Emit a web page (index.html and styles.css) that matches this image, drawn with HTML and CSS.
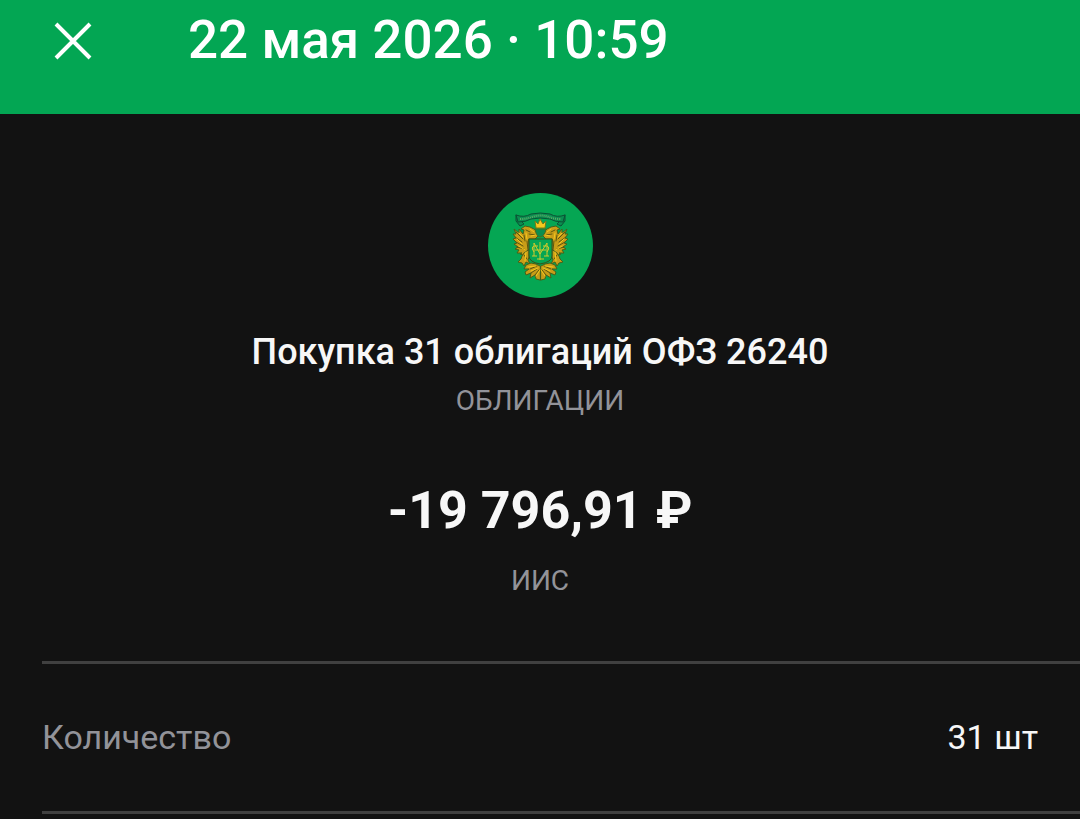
FILE: index.html
```html
<!DOCTYPE html>
<html lang="ru">

<head>
    <meta charset="UTF-8" />
    <meta name="viewport" content="width=device-width, initial-scale=1" />
    <title>Покупка облигаций</title>
    <link rel="stylesheet" href="styles.css">
</head>

<body>
    <header class="topbar">
        <button type="button" class="close-btn" aria-label="Закрыть">
            <svg viewBox="0 0 40 40" width="40" height="40" fill="none" stroke="currentColor" stroke-width="4">
                <path d="M3 4 37 38M37 4 3 38" />
            </svg>
        </button>
        <h1 class="topbar-title">22 мая 2026 · 10:59</h1>
    </header>

    <main>
        <section class="summary">
            <svg class="emblem" viewBox="0 0 105 105" aria-hidden="true">
                <defs>
                    <!-- left half of the eagle, mirrored for the right one -->
                    <g id="eagle-half" stroke-linejoin="round" stroke-linecap="round">
                        <path class="gold" d="M41 58 38 62 35 62 32 61 34 60 29 60 31 57 27 56 30 54 26 51 29 50 25 46 28 45 25 41 28 41 26 36 31 40 31 36 35 41 36 37 33 36 37 33 42 34 46 36 50 39 51 42 47 46 41 46Z" />
                        <path class="gold" d="M41 57 41 64 40 67 42 71 38 69 36 73 34 70 30 69 33 66 34 63 36 60Z" />
                        <path class="gold" d="M52 73 48 71 43 70 38 72 36 76 41 76 37 79 38 82 43 80 42 85 47 82 48 86 52 87Z" />
                        <path class="feather" d="M28 39 35 46M27 44 34 49M28 49 35 53M29 54 36 56M36 42 37 48M39 48 40 57M41 41 47 42M36 62 39 66M42 76 49 73M43 80 49 76M47 82 51 77M38 37 42 39" />
                        <path class="shine" d="M31 40 35 44M29 46 34 51M31 53 37 57M38 40 39 46M38 59 37 68M40 74 48 73M43 78 50 75M48 83 52 77M42 36 46 39M43 43 48 42" />
                        <path class="scroll" d="M28 22 28 28 32 33 36 31 33 28" />
                    </g>
                </defs>
                <circle cx="52.5" cy="52.5" r="52.5" fill="#05a653" />
                <use href="#eagle-half" />
                <use href="#eagle-half" transform="matrix(-1 0 0 1 105 0)" />
                <path class="scroll" d="M28 22Q36 25 43 21Q52 19 62 21Q69 25 77 22L75 29Q67 29 62 26Q52 24 43 26Q38 29 30 29Z" />
                <path class="motto" d="M32 26Q39 26 44 24Q52 21 61 24Q66 26 73 26" />
                <path class="ring" d="M47 36Q48 43 52 44Q57 43 58 36Z" />
                <path class="crown" d="M48 35 47 28 50 31 52 26 55 31 58 28 57 35Z" />
                <path class="shield" d="M41 46H64V63Q64 69 52 71Q41 69 41 63Z" />
                <path class="monogram" d="M46 63V50L52 61 59 50V63M44 63H49M56 63H61M52 49V67M47 57H58M50 53Q41 52 46 59M55 53Q64 52 59 59M49 66H56" />
            </svg>
            <h2 class="operation">Покупка 31 облигаций ОФЗ 26240</h2>
            <p class="caption">ОБЛИГАЦИИ</p>
            <p class="amount">-19 796,91 ₽</p>
            <p class="caption">ИИС</p>
        </section>

        <dl class="details">
            <div class="details-row">
                <dt>Количество</dt>
                <dd>31 шт</dd>
            </div>
        </dl>
    </main>
</body>

</html>
```
FILE: styles.css
```css
:root {
    --green: #03a653;
    --background: #121212;
    --text-color: #f7f7f7;
    --muted: #929399;
    --divider: #404040;
}

* {
    box-sizing: border-box;
}

body {
    margin: 0;
    font-family: Roboto, "Noto Sans", sans-serif;
    background: var(--background);
    color: var(--text-color);
}

h1,
h2,
p,
dl,
dd {
    margin: 0;
}

.topbar {
    display: flex;
    align-items: center;
    gap: 95px;
    padding: 8px 42px 42px 53px;
    background: var(--green);
    color: white;
}

.close-btn {
    display: flex;
    flex-shrink: 0;
    padding: 0;
    border: none;
    background: none;
    color: inherit;
    cursor: pointer;
}

.topbar-title {
    font-size: 53px;
    line-height: 64px;
    font-weight: 500;
}

.summary {
    display: flex;
    flex-direction: column;
    align-items: center;
    padding: 79px 42px 60px;
    text-align: center;
}

.emblem {
    width: 105px;
    height: 105px;
    margin-bottom: 30px;
}

.gold {
    fill: #c89d18;
    stroke: #46601a;
    stroke-width: 1;
}

.feather {
    fill: none;
    stroke: #5c560f;
    stroke-width: 1;
}

.shine {
    fill: none;
    stroke: #f5c81e;
    stroke-width: 1;
}

.crown {
    fill: #f5c81e;
    stroke: #7a7a16;
    stroke-width: 1;
}

.scroll {
    fill: #0b8e50;
    stroke: #0b5134;
    stroke-width: 1;
}

.motto {
    fill: none;
    stroke: #5fa866;
    stroke-width: 2;
    stroke-dasharray: 1 1;
}

.ring {
    fill: #0b8e50;
    stroke: #4d6b1c;
    stroke-width: 1;
}

.shield {
    fill: #05a653;
    stroke: #37501b;
    stroke-width: 1;
}

.monogram {
    fill: none;
    stroke: #d0c92c;
    stroke-width: 1;
}

.operation {
    font-size: 36px;
    line-height: 48px;
    font-weight: 500;
}

.caption {
    font-size: 28px;
    line-height: 40px;
    color: var(--muted);
}

.operation + .caption {
    margin-top: 5px;
}

.amount {
    margin: 60px 0 20px;
    font-size: 52px;
    line-height: 60px;
    font-weight: 700;
}

.details {
    margin-left: 42px;
    border-top: 3px solid var(--divider);
}

.details-row {
    display: flex;
    justify-content: space-between;
    gap: 24px;
    padding: 49px 42px 50px 0;
    border-bottom: 3px solid var(--divider);
    font-size: 34px;
    line-height: 48px;
}

.details-row dt {
    color: var(--muted);
}
```
